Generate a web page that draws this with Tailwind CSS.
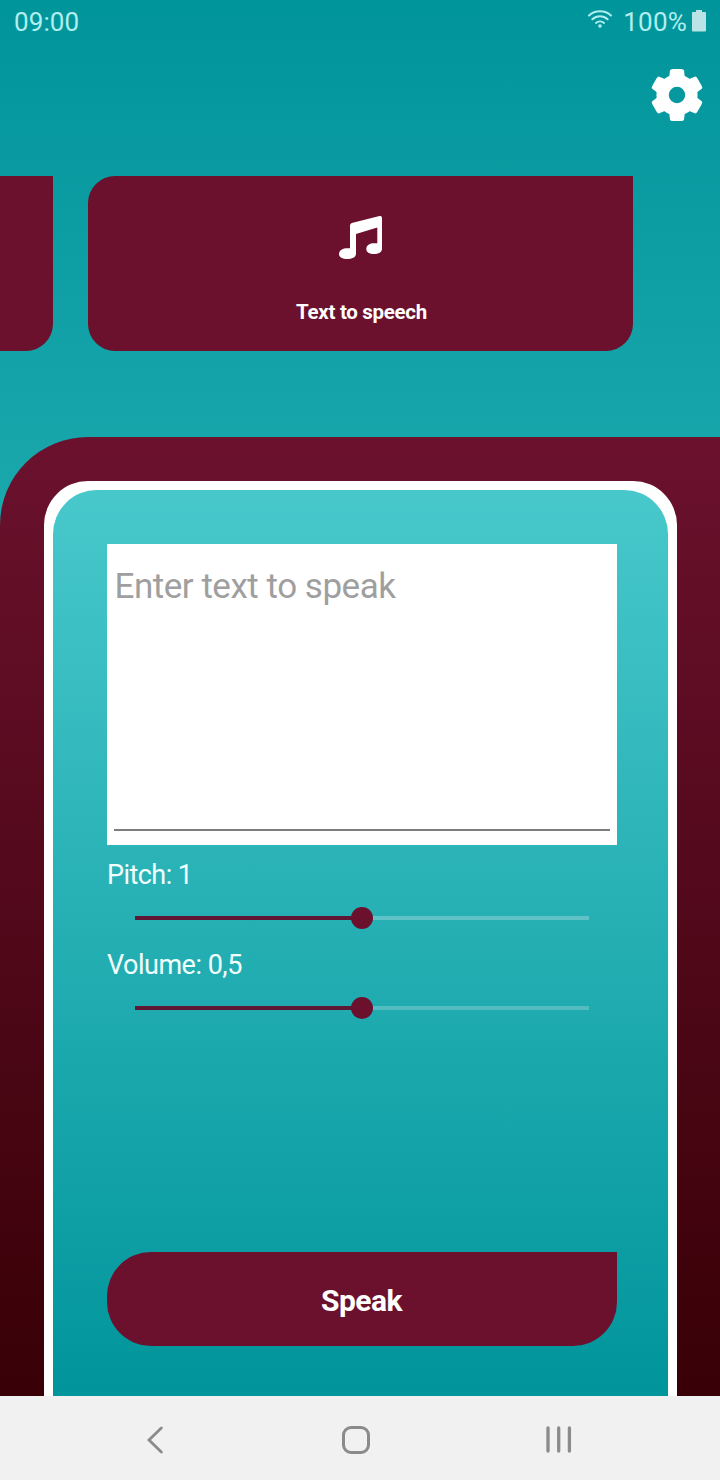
<!DOCTYPE html>
<html lang="en">
<head>
<meta charset="utf-8">
<title>Text to speech</title>
<script src="https://cdn.jsdelivr.net/npm/@tailwindcss/browser@4"></script>
</head>
<body class="w-[720px] h-[1480px] overflow-hidden flex flex-col font-['Roboto',sans-serif]">
<div class="h-[1396px] shrink-0 flex flex-col overflow-hidden bg-linear-to-b/srgb from-[#00959b] to-[#48c8cb]">
  <header class="h-11 shrink-0 flex justify-between pl-3.5 pr-3.5 text-[26px] leading-[44px] text-[#b0eeef]">
    <span class="tracking-[0.1px]">09:00</span>
    <div class="flex">
      <svg class="w-6 h-5 mt-[9px] mr-[11px]" viewBox="0 0 24 20" fill="none" stroke="#b0eeef" stroke-width="2" stroke-linecap="round"><path d="M1 6.500C7 .9 17 .9 23 6.500M4.400 10.300C8.800 6.300 15.200 6.300 19.600 10.300M8 13.900C10.300 12 13.700 12 16 13.900"/><circle cx="12" cy="17" r="1.800" fill="#b0eeef" stroke="none"/></svg>
      <span class="tracking-[0.2px]">100%</span>
      <svg class="w-3.5 h-[22px] mt-[10px] ml-[5px]" viewBox="0 0 14 22" fill="#b9e3e5"><path d="M4 0h6v2h3q1 0 1 1v17.500q0 1-1 1H1q-1 0-1-1V3q0-1 1-1h3z"/></svg>
    </div>
  </header>
  <div class="h-[132px] shrink-0 flex justify-end pt-[25px] pr-[17px]">
    <svg class="size-[52px]" viewBox="-26 -26 52 52" fill="#fff">
      <defs><path id="tooth" d="M-8-16L-7-24.500Q-6.800-26-4-26H4Q6.800-26 7-24.500L8-16z"/></defs>
      <circle r="14.400" fill="none" stroke="#fff" stroke-width="12.400"/>
      <use href="#tooth"/><use href="#tooth" transform="rotate(60)"/><use href="#tooth" transform="rotate(120)"/><use href="#tooth" transform="rotate(180)"/><use href="#tooth" transform="rotate(240)"/><use href="#tooth" transform="rotate(300)"/>
    </svg>
  </div>
  <div class="h-[175px] shrink-0 flex gap-[35px]">
    <div class="w-[53px] shrink-0 bg-[#6b112e] rounded-br-[27px]"></div>
    <div class="w-[545px] shrink-0 bg-[#6b112e] rounded-[27px] rounded-tr-none flex flex-col items-center pt-10">
      <svg class="w-[43px] h-[43px]" viewBox="0 0 43 43" fill="#fff"><path d="M11 9.500Q11 7.700 12.800 7.100L40.500 .1Q43-.4 43 2V32.500C43 36.500 39.500 38 35 38C30.500 38 27.300 36.300 27.300 33C27.300 29 31 27.200 35 27.200H38.300V11.500L17 18V37.500C17 41.500 13 43 8.500 43C3.500 43 0 41.300 0 38C0 34 4 32.200 8.500 32.200H11z"/></svg>
      <span class="mt-[39px] pl-0.5 text-[20.500px] leading-[28px] font-bold text-white tracking-[-0.3px]">Text to speech</span>
    </div>
  </div>
  <main class="mt-[86px] h-[959px] shrink-0 rounded-tl-[88px] bg-linear-to-b/srgb from-[#6b112e] to-[#380006] pt-11 pl-11 pr-[43px]">
    <section class="h-full rounded-t-[44px] bg-white pt-[9px] px-[9px]">
      <div class="h-[906px] rounded-t-[44px] bg-linear-to-b/srgb from-[#48c8cb] to-[#00959b] pt-[54px] pl-[54px] pr-[51px] flex flex-col">
        <div class="h-[301px] shrink-0 bg-white px-[7px] pt-[19px] pb-[14px] flex flex-col justify-between">
          <p class="pl-[0.5px] text-[35px] leading-[48px] text-[#9f9f9f] tracking-[-0.48px]">Enter text to speak</p>
          <div class="h-0.5 bg-[#7d7d7d]"></div>
        </div>
        <p class="mt-[14px] text-[27px] leading-8 text-[#f2ffff] tracking-[-0.55px]">Pitch: 1</p>
        <div class="mt-4 h-[22px] mx-7 flex items-center">
          <div class="h-1 flex-1 bg-[#5f1733]"></div><div class="size-[22px] -mx-[11px] rounded-full bg-[#6b112e] z-10"></div><div class="h-1 flex-1 bg-[#5fc2c7]"></div>
        </div>
        <p class="mt-5 text-[27px] leading-8 text-[#f2ffff] tracking-[-0.5px]">Volume: 0,5</p>
        <div class="mt-4 h-[22px] mx-7 flex items-center">
          <div class="h-1 flex-1 bg-[#5f1733]"></div><div class="size-[22px] -mx-[11px] rounded-full bg-[#6b112e] z-10"></div><div class="h-1 flex-1 bg-[#53bcc1]"></div>
        </div>
        <button class="mt-auto mb-[50px] h-[94px] shrink-0 rounded-[44px] rounded-tr-none bg-[#6b112e] pt-0.5 pr-px text-white font-bold text-[30px] tracking-[-0.5px]">Speak</button>
      </div>
    </section>
  </main>
</div>
<nav class="h-[84px] shrink-0 bg-[#f1f1f1] pt-[3px] flex items-center justify-between pl-[147px] pr-[148px]">
  <svg class="w-4 h-7" viewBox="0 0 16 28" fill="none" stroke="#8b8b8b" stroke-width="2.800" stroke-linecap="round"><path d="M14.300 2L2 14L14.300 26"/></svg>
  <svg class="size-7 ml-[3px]" viewBox="0 0 28 28" fill="none" stroke="#8b8b8b" stroke-width="3"><rect x="1.500" y="1.500" width="25" height="25" rx="7.500"/></svg>
  <svg class="w-[26px] h-7" viewBox="0 0 26 28" fill="none" stroke="#8b8b8b" stroke-width="3.300" stroke-linecap="round"><path d="M2 2V25M12.700 2V25M23.400 2V25"/></svg>
</nav>
</body>
</html>
